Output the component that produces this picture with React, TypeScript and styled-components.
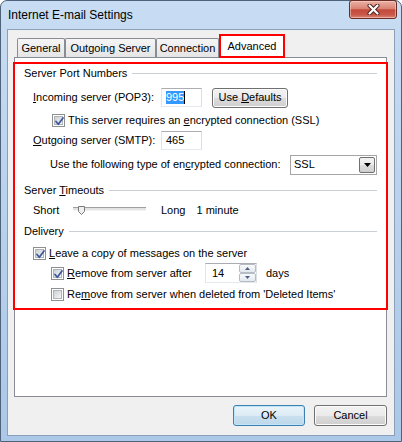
import React from "react";
import styled, { createGlobalStyle } from "styled-components";

const GlobalStyle = createGlobalStyle`
  body {
    margin: 0;
    background: #ffffff;
  }
  * {
    box-sizing: border-box;
  }
`;

const Window = styled.div`
  width: 402px;
  height: 442px;
  display: flex;
  flex-direction: column;
  padding: 0 6px 5px 6px;
  border: 1px solid #4f627a;
  border-radius: 7px 7px 0 0;
  background: linear-gradient(180deg, #c8ddf3 0%, #bcd4ee 35%, #abc8e8 100%);
  font-family: "Liberation Sans", Arial, sans-serif;
  font-size: 11px;
  line-height: 13px;
  color: #000;
`;

const TitleBar = styled.div`
  height: 28px;
  display: flex;
  align-items: flex-start;
`;

const Title = styled.div`
  flex: 1;
  padding: 7px 0 0 1px;
  font-size: 12px;
  line-height: 15px;
`;

const CloseButton = styled.div`
  width: 48px;
  height: 19px;
  margin: -1px -2px 0 0;
  display: flex;
  align-items: center;
  justify-content: center;
  border: 1px solid #6a2d26;
  border-radius: 3px;
  background: linear-gradient(
    180deg,
    #eab1a5 0%,
    #d98373 45%,
    #c4493a 52%,
    #c9584a 80%,
    #db8577 100%
  );
  box-shadow: inset 0 0 0 1px rgba(255, 220, 210, 0.5);
`;

const Client = styled.div`
  flex: 1;
  display: flex;
  flex-direction: column;
  background: #f0f0f0;
  border: 1px solid #8ba0b8;
  padding: 4px 7px 0 6px;
`;

const TabStrip = styled.div`
  display: flex;
  align-items: flex-end;
  height: 23px;
  padding-left: 3px;
`;

const Tab = styled.div<{ $w: number; $active?: boolean }>`
  width: ${(p) => p.$w}px;
  height: ${(p) => (p.$active ? 24 : 19)}px;
  margin-bottom: ${(p) => (p.$active ? -1 : 0)}px;
  position: relative;
  z-index: ${(p) => (p.$active ? 2 : 0)};
  display: flex;
  align-items: center;
  justify-content: center;
  padding-top: ${(p) => (p.$active ? 0 : 1)}px;
  border: ${(p) => (p.$active ? "2px solid #ff0000" : "1px solid #898c95")};
  border-bottom: ${(p) => (p.$active ? "2px solid #ff0000" : "none")};
  border-radius: ${(p) => (p.$active ? "0" : "2px 2px 0 0")};
  background: ${(p) =>
    p.$active ? "#ffffff" : "linear-gradient(180deg, #f5f5f5 0%, #e5e5e5 100%)"};
`;

const Panel = styled.div`
  height: 340px;
  display: flex;
  flex-direction: column;
  background: #ffffff;
  border: 1px solid #898c95;
`;

const Highlight = styled.div`
  margin: 4px -2px 0 -2px;
  border: 2px solid #ff0000;
  padding: 0 9px 7px 0;
  display: flex;
  flex-direction: column;
`;

const Row = styled.div<{ $mt: number; $h: number; $indent: number }>`
  display: flex;
  align-items: center;
  margin-top: ${(p) => p.$mt}px;
  height: ${(p) => p.$h}px;
  padding-left: ${(p) => p.$indent}px;
  white-space: nowrap;
`;

const Rule = styled.div`
  flex: 1;
  height: 1px;
  margin-left: 5px;
  background: #c9d0d6;
`;

const Label = styled.div<{ $w: number }>`
  width: ${(p) => p.$w}px;
  flex-shrink: 0;
`;

const Key = styled.span`
  text-decoration: underline;
`;

const Field = styled.div<{ $w: number }>`
  width: ${(p) => p.$w}px;
  height: 19px;
  display: flex;
  align-items: center;
  padding-left: 4px;
  border: 1px solid;
  border-color: #abadb3 #dbdfe6 #e3e9ef #e2e3ea;
  background: #ffffff;
`;

const Selected = styled.span`
  background: #3399ff;
  color: #ffffff;
`;

const Caret = styled.span`
  width: 1px;
  height: 13px;
  background: #000;
`;

const Button = styled.div<{ $w: number; $h: number; $default?: boolean }>`
  width: ${(p) => p.$w}px;
  height: ${(p) => p.$h}px;
  flex-shrink: 0;
  display: flex;
  align-items: center;
  justify-content: center;
  border: 1px solid ${(p) => (p.$default ? "#3c7fb1" : "#707070")};
  border-radius: 3px;
  background: ${(p) =>
    p.$default
      ? "linear-gradient(180deg, #eaf4fa 0%, #dcebf5 50%, #c9e0ef 50%, #bdd7ea 100%)"
      : "linear-gradient(180deg, #f2f2f2 0%, #ebebeb 50%, #dddddd 50%, #cfcfcf 100%)"};
  box-shadow: inset 0 0 0 1px ${(p) => (p.$default ? "#c2e6f9" : "#fcfcfc")};
`;

const CheckItem = styled.div`
  display: flex;
  align-items: center;
  gap: 3px;
`;

const CheckBox = styled.div`
  width: 13px;
  height: 13px;
  flex-shrink: 0;
  position: relative;
  border: 1px solid #8e8f8f;
  background: #ffffff;
  padding: 1px;
`;

const CheckInner = styled.div`
  width: 9px;
  height: 9px;
  border: 1px solid #aeb3b9;
  background: linear-gradient(135deg, #cbcfd5 0%, #f6f6f6 100%);
`;

const CheckMark = styled.svg`
  position: absolute;
  left: 1px;
  top: 1px;
`;

const Select = styled.div`
  width: 87px;
  height: 20px;
  display: flex;
  align-items: center;
  padding: 0 1px 0 3px;
  border: 1px solid #a5a5a5;
  background: #ffffff;
`;

const SelectValue = styled.span`
  flex: 1;
`;

const DropButton = styled.div`
  width: 16px;
  height: 16px;
  display: flex;
  align-items: center;
  justify-content: center;
  border: 1px solid #707070;
  border-radius: 2px;
  background: linear-gradient(180deg, #f2f2f2 0%, #ebebeb 50%, #dddddd 50%, #cfcfcf 100%);
`;

const Slider = styled.div`
  position: relative;
  width: 73px;
  height: 4px;
  margin-bottom: 3px;
  border-top: 1px solid #a0a0a0;
  border-bottom: 1px solid #f4f4f4;
  background: #e3e3e3;
`;

const Thumb = styled.svg`
  position: absolute;
  left: 5px;
  top: -2px;
`;

const Gap = styled.span<{ $w: number }>`
  display: inline-block;
  width: ${(p) => p.$w}px;
  flex-shrink: 0;
`;

const Spin = styled.div`
  width: 52px;
  height: 20px;
  display: flex;
  border: 1px solid;
  border-color: #abadb3 #dbdfe6 #e3e9ef #e2e3ea;
  background: #ffffff;
`;

const SpinText = styled.div`
  flex: 1;
  display: flex;
  align-items: center;
  padding-left: 6px;
`;

const SpinButtons = styled.div`
  width: 17px;
  display: flex;
  flex-direction: column;
`;

const SpinBtn = styled.div`
  flex: 1;
  display: flex;
  align-items: center;
  justify-content: center;
  border: 1px solid #b7bcc4;
  border-radius: 2px;
  background: linear-gradient(180deg, #f8fafc 0%, #e4e9ef 100%);
`;

const ButtonRow = styled.div`
  display: flex;
  justify-content: flex-end;
  gap: 9px;
  margin-top: 8px;
`;

const Check = ({ checked }: { checked?: boolean }) => (
  <CheckBox>
    <CheckInner />
    {checked ? (
      <CheckMark width="11" height="11" viewBox="0 0 11 11">
        <path
          d="M2 5.5 L4.3 8.3 L9 2"
          fill="none"
          stroke="#3f5a9c"
          strokeWidth="1.8"
          strokeLinecap="round"
          strokeLinejoin="round"
        />
      </CheckMark>
    ) : null}
  </CheckBox>
);

const App = () => {
  return (
    <>
      <GlobalStyle />
      <Window>
        <TitleBar>
          <Title>Internet E-mail Settings</Title>
          <CloseButton>
            <svg width="13" height="11" viewBox="0 0 13 11">
              <path
                d="M2.5 1.5 L10.5 9.5 M10.5 1.5 L2.5 9.5"
                stroke="#4a1f1a"
                strokeWidth="4"
                strokeLinecap="round"
              />
              <path
                d="M2.5 1.5 L10.5 9.5 M10.5 1.5 L2.5 9.5"
                stroke="#ffffff"
                strokeWidth="2.2"
                strokeLinecap="round"
              />
            </svg>
          </CloseButton>
        </TitleBar>

        <Client>
          <TabStrip>
            <Tab $w={48}>General</Tab>
            <Tab $w={91}>Outgoing Server</Tab>
            <Tab $w={63}>Connection</Tab>
            <Tab $w={66} $active>
              Advanced
            </Tab>
          </TabStrip>

          <Panel>
            <Highlight>
              <Row $mt={2} $h={14} $indent={9}>
                <span>Server Port Numbers</span>
                <Rule />
              </Row>

              <Row $mt={7} $h={21} $indent={18}>
                <Label $w={128}>
                  <Key>I</Key>ncoming server (POP3):
                </Label>
                <Field $w={41}>
                  <Selected>995</Selected>
                  <Caret />
                </Field>
                <Gap $w={10} />
                <Button $w={76} $h={20}>
                  <span>
                    Use <Key>D</Key>efaults
                  </span>
                </Button>
              </Row>

              <Row $mt={5} $h={14} $indent={37}>
                <CheckItem>
                  <Check checked />
                  <span>
                    This server requires an <Key>e</Key>ncrypted connection (SSL)
                  </span>
                </CheckItem>
              </Row>

              <Row $mt={3} $h={21} $indent={18}>
                <Label $w={128}>
                  <Key>O</Key>utgoing server (SMTP):
                </Label>
                <Field $w={41}>465</Field>
              </Row>

              <Row $mt={3} $h={21} $indent={35}>
                <Label $w={240}>
                  Use the following type of en<Key>c</Key>rypted connection:
                </Label>
                <Select>
                  <SelectValue>SSL</SelectValue>
                  <DropButton>
                    <svg width="7" height="4" viewBox="0 0 7 4">
                      <path d="M0 0 H7 L3.5 4 Z" fill="#000" />
                    </svg>
                  </DropButton>
                </Select>
              </Row>

              <Row $mt={8} $h={14} $indent={9}>
                <span>
                  Server <Key>T</Key>imeouts
                </span>
                <Rule />
              </Row>

              <Row $mt={5} $h={16} $indent={18}>
                <Label $w={40}>Short</Label>
                <Slider>
                  <Thumb width="7" height="9" viewBox="0 0 7 9">
                    <path
                      d="M0.5 0.5 H6.5 V5.5 L3.5 8.5 L0.5 5.5 Z"
                      fill="#efefef"
                      stroke="#7b7b7b"
                    />
                  </Thumb>
                </Slider>
                <Gap $w={15} />
                <span>Long</span>
                <Gap $w={11} />
                <span>1 minute</span>
              </Row>

              <Row $mt={6} $h={14} $indent={9}>
                <span>Delivery</span>
                <Rule />
              </Row>

              <Row $mt={8} $h={14} $indent={18}>
                <CheckItem>
                  <Check checked />
                  <span>
                    <Key>L</Key>eave a copy of messages on the server
                  </span>
                </CheckItem>
              </Row>

              <Row $mt={3} $h={20} $indent={36}>
                <CheckItem>
                  <Check checked />
                  <Label $w={138}>
                    <Key>R</Key>emove from server after
                  </Label>
                </CheckItem>
                <Spin>
                  <SpinText>14</SpinText>
                  <SpinButtons>
                    <SpinBtn>
                      <svg width="5" height="3" viewBox="0 0 5 3">
                        <path d="M0 3 L2.5 0 L5 3 Z" fill="#4d6185" />
                      </svg>
                    </SpinBtn>
                    <SpinBtn>
                      <svg width="5" height="3" viewBox="0 0 5 3">
                        <path d="M0 0 H5 L2.5 3 Z" fill="#4d6185" />
                      </svg>
                    </SpinBtn>
                  </SpinButtons>
                </Spin>
                <Gap $w={9} />
                <span>days</span>
              </Row>

              <Row $mt={4} $h={14} $indent={36}>
                <CheckItem>
                  <Check />
                  <span>
                    Re<Key>m</Key>ove from server when deleted from 'Deleted Items'
                  </span>
                </CheckItem>
              </Row>
            </Highlight>
          </Panel>

          <ButtonRow>
            <Button $w={72} $h={21} $default>
              OK
            </Button>
            <Button $w={73} $h={21}>
              Cancel
            </Button>
          </ButtonRow>
        </Client>
      </Window>
    </>
  );
};

export default App;
